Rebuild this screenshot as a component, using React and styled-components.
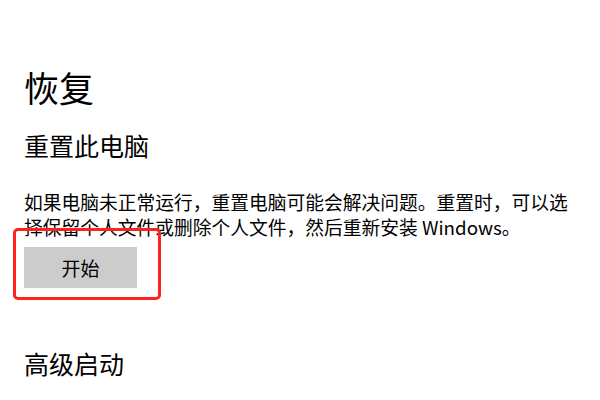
import React from "react";
import styled, { createGlobalStyle } from "styled-components";

const GlobalStyle = createGlobalStyle`
	html, body {
		margin: 0;
		padding: 0;
		background: #ffffff;
	}
	body {
		font-family: "Noto Sans CJK SC", "Noto Sans", sans-serif;
		color: #000000;
	}
`;

export default function App() {
	return (
		<Page>
			<GlobalStyle />
			<Title>恢复</Title>
			<Section>
				<Heading>重置此电脑</Heading>
				<Description>
					如果电脑未正常运行，重置电脑可能会解决问题。重置时，可以选择保留个人文件或删除个人文件，然后重新安装 Windows。
				</Description>
				<ButtonWrap>
					<Button type="button">开始</Button>
					<Highlight />
				</ButtonWrap>
			</Section>
			<Heading $top={63}>高级启动</Heading>
		</Page>
	);
}

const Page = styled.div`
	width: 600px;
	height: 400px;
	box-sizing: border-box;
	padding: 69px 16px 0 24px;
	overflow: hidden;
	display: flex;
	flex-direction: column;
	align-items: flex-start;
`;

const Title = styled.h1`
	margin: 0;
	font-size: 35px;
	line-height: 36px;
	font-weight: 400;
`;

const Section = styled.div`
	display: flex;
	flex-direction: column;
	align-items: flex-start;
`;

const Heading = styled.h2`
	margin: ${(p) => p.$top || 28}px 0 0 0;
	font-size: 25px;
	line-height: 25px;
	font-weight: 400;
`;

const Description = styled.p`
	margin: 31px 0 0 0;
	font-size: 18.75px;
	line-height: 25px;
	width: 552px;
`;

const ButtonWrap = styled.div`
	position: relative;
	margin-top: 8px;
`;

const Button = styled.button`
	display: flex;
	align-items: center;
	justify-content: center;
	width: 113px;
	height: 41px;
	border: none;
	padding: 0;
	background: #cccccc;
	font-family: "Noto Sans CJK SC", sans-serif;
	font-size: 19px;
	color: #000000;
`;

const Highlight = styled.div`
	position: absolute;
	left: -11px;
	top: -19px;
	width: 148px;
	height: 72px;
	box-sizing: border-box;
	border: 3px solid #ff2020;
	border-radius: 5px;
	pointer-events: none;
`;
